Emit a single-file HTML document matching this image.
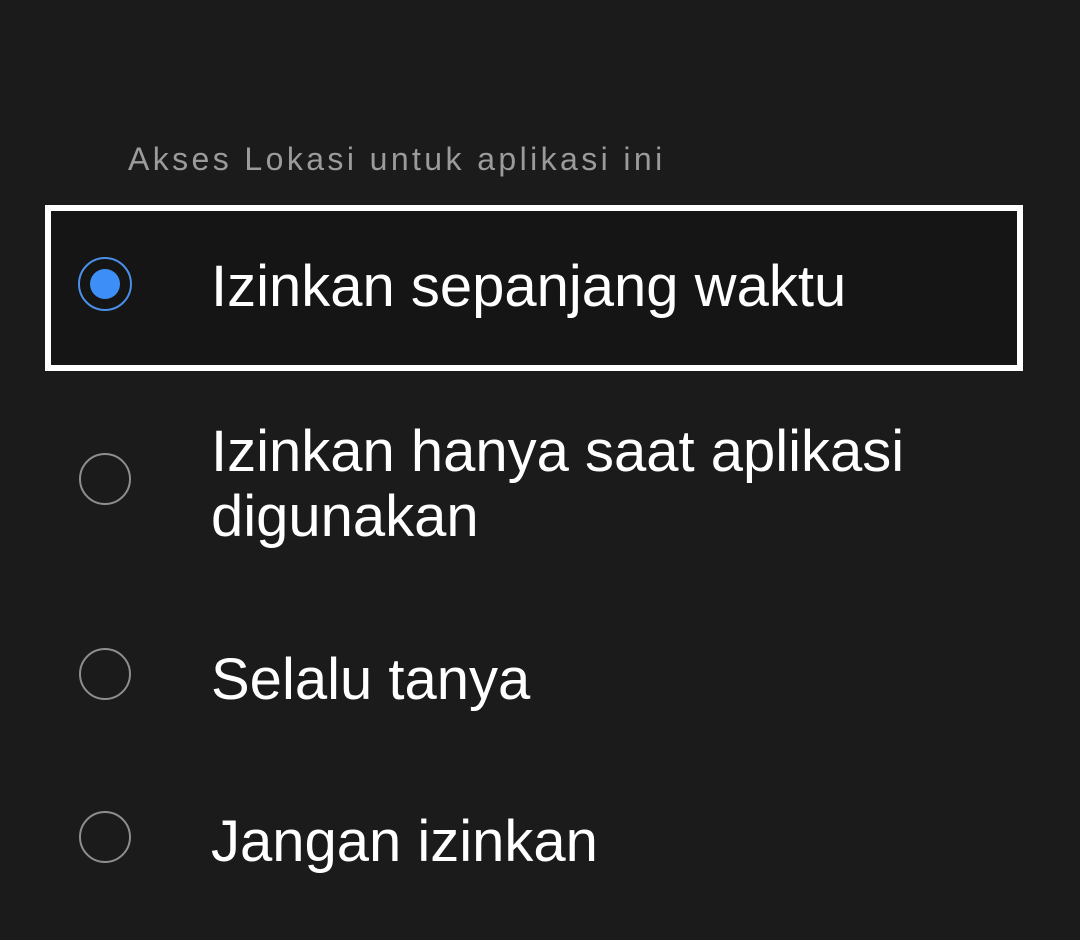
<!DOCTYPE html>
<html><head><style>
html,body{margin:0;padding:0;background:#1b1b1b;width:1080px;height:940px;overflow:hidden;font-family:"Liberation Sans",Roboto,sans-serif}
.hdr{position:absolute;left:128px;top:141px;font-size:32px;letter-spacing:3.4px;color:#9b9b9b;white-space:nowrap}
.box{position:absolute;left:45px;top:205px;width:966px;height:154px;border:6px solid #fff;background:#151515}
.t{position:absolute;left:211px;color:#fff;font-size:58px;line-height:65px;white-space:nowrap}
.r{position:absolute;width:48px;height:48px;border:2.5px solid #8e8e8e;border-radius:50%;box-sizing:border-box}
</style></head><body>
<div class="hdr">Akses Lokasi untuk aplikasi ini</div>
<div class="box"></div>
<div class="r" style="left:78px;top:257px;width:54px;height:54px;border-color:#4a90e8;"></div>
<div style="position:absolute;left:90px;top:269px;width:30px;height:30px;border-radius:50%;background:#3d8ff7"></div>
<div class="t" style="top:254px">Izinkan sepanjang waktu</div>
<div class="r" style="left:79px;top:453px;width:52px;height:52px"></div>
<div class="t" style="top:419px">Izinkan hanya saat aplikasi<br>digunakan</div>
<div class="r" style="left:79px;top:648px;width:52px;height:52px"></div>
<div class="t" style="top:647px">Selalu tanya</div>
<div class="r" style="left:79px;top:811px;width:52px;height:52px"></div>
<div class="t" style="top:809px">Jangan izinkan</div>
</body></html>
